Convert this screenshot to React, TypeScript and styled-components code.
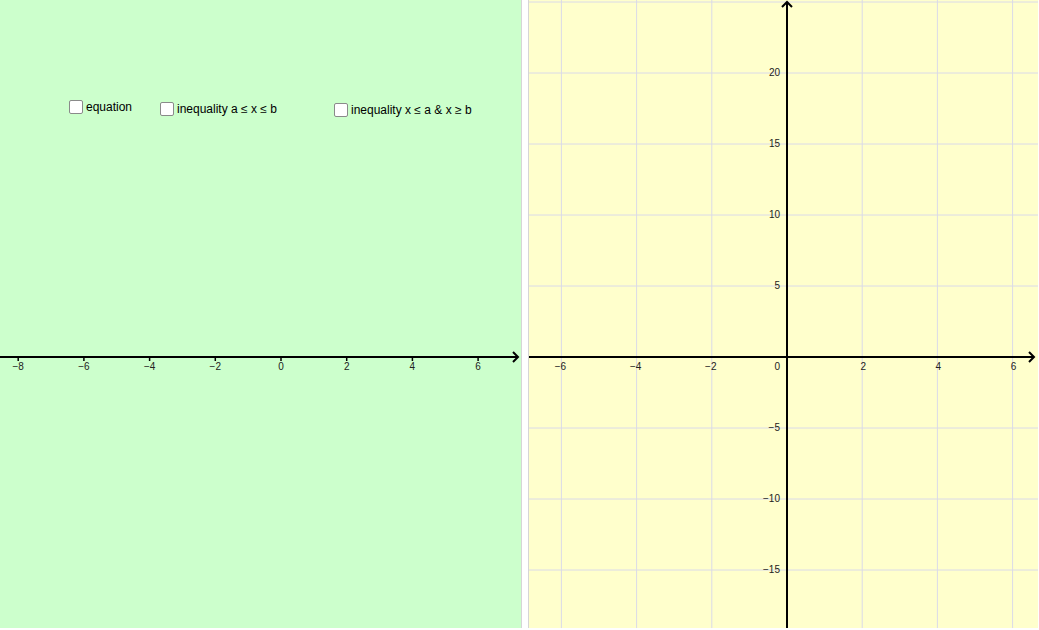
import React from 'react';
import styled, { createGlobalStyle } from 'styled-components';

const GlobalStyle = createGlobalStyle`
    html, body {
        margin: 0;
        padding: 0;
        background: #ffffff;
        font-family: "Liberation Sans", Arial, sans-serif;
    }
`;

const Page = styled.div`
    display: flex;
    width: 1039px;
    height: 630px;
    background: #ffffff;
`;

const Panel = styled.div<{ $bg: string; $width: number }>`
    position: relative;
    width: ${p => p.$width}px;
    height: 628px;
    background: ${p => p.$bg};
    flex-shrink: 0;
`;

const LeftPanel = styled(Panel)`
    border-right: 1px solid #d6d6d6;
`;

const RightPanel = styled(Panel)`
    margin-left: 6px;
    border-left: 1px solid #d6d6d6;
`;

const Canvas = styled.svg`
    display: block;
    position: absolute;
    inset: 0;
`;

const Toggle = styled.label<{ $x: number; $y: number }>`
    position: absolute;
    left: ${p => p.$x}px;
    top: ${p => p.$y}px;
    display: flex;
    align-items: center;
    gap: 3px;
    font-size: 12px;
    color: #000;
    cursor: pointer;
    white-space: nowrap;
`;

const Box = styled.span`
    width: 12px;
    height: 12px;
    background: #ffffff;
    border: 1px solid #8a8a8a;
    border-radius: 2px;
`;

const LABEL = { fontSize: 10, fill: '#222', fontFamily: '"Liberation Sans", Arial, sans-serif' };

const LineAxis: React.FC = () => {
    const zero = 281;
    const unit = 32.85;
    const ticks = [-8, -6, -4, -2, 0, 2, 4, 6];
    return (
        <Canvas width={521} height={628} viewBox="0 0 521 628">
            <line x1={0} y1={357} x2={517} y2={357} stroke="#000" strokeWidth={2} />
            <polyline points="513,352 518,357 513,362" fill="none" stroke="#000" strokeWidth={2} />
            {ticks.map(t => {
                const x = zero + t * unit;
                return (
                    <g key={t}>
                        <line x1={x} y1={357} x2={x} y2={361} stroke="#000" strokeWidth={1.5} />
                        <text x={x} y={370} textAnchor="middle" {...LABEL}>
                            {t < 0 ? `\u2212${-t}` : t}
                        </text>
                    </g>
                );
            })}
        </Canvas>
    );
};

const Graph: React.FC = () => {
    const ox = 787;
    const oy = 357;
    const ux = 37.6;
    const uy = 14.2;
    const xs = [-6, -4, -2, 2, 4, 6];
    const ys = [25, 20, 15, 10, 5, -5, -10, -15];
    return (
        <Canvas width={509} height={628} viewBox="529 0 509 628">
            {xs.map(t => (
                <line key={`vx${t}`} x1={ox + t * ux} y1={0} x2={ox + t * ux} y2={628} stroke="#dadae8" strokeWidth={1} />
            ))}
            {ys.map(t => (
                <line key={`hy${t}`} x1={529} y1={oy - t * uy} x2={1038} y2={oy - t * uy} stroke="#dadae8" strokeWidth={1} />
            ))}
            <line x1={529} y1={oy} x2={1033} y2={oy} stroke="#000" strokeWidth={2} />
            <polyline points="1029,352 1034,357 1029,362" fill="none" stroke="#000" strokeWidth={2} />
            <line x1={ox} y1={3} x2={ox} y2={628} stroke="#000" strokeWidth={2} />
            <polyline points="782,7 787,2 792,7" fill="none" stroke="#000" strokeWidth={2} />
            {xs.map(t => (
                <text key={`lx${t}`} x={ox + t * ux + (t < 0 ? -1 : 1)} y={370} textAnchor="middle" {...LABEL}>
                    {t < 0 ? `\u2212${-t}` : t}
                </text>
            ))}
            <text x={780} y={370} textAnchor="end" {...LABEL}>0</text>
            {ys.filter(t => t !== 25).map(t => (
                <text key={`ly${t}`} x={780} y={oy - t * uy + 3} textAnchor="end" {...LABEL}>
                    {t < 0 ? `\u2212${-t}` : t}
                </text>
            ))}
        </Canvas>
    );
};

const App: React.FC = () => (
    <>
        <GlobalStyle />
        <Page>
            <LeftPanel $bg="#ccffcc" $width={521}>
                <LineAxis />
                <Toggle $x={69} $y={100}>
                    <Box />
                    equation
                </Toggle>
                <Toggle $x={160} $y={102}>
                    <Box />
                    inequality a ≤ x ≤ b
                </Toggle>
                <Toggle $x={334} $y={103}>
                    <Box />
                    inequality x ≤ a &amp; x ≥ b
                </Toggle>
            </LeftPanel>
            <RightPanel $bg="#ffffcc" $width={509}>
                <Graph />
            </RightPanel>
        </Page>
    </>
);

export default App;
